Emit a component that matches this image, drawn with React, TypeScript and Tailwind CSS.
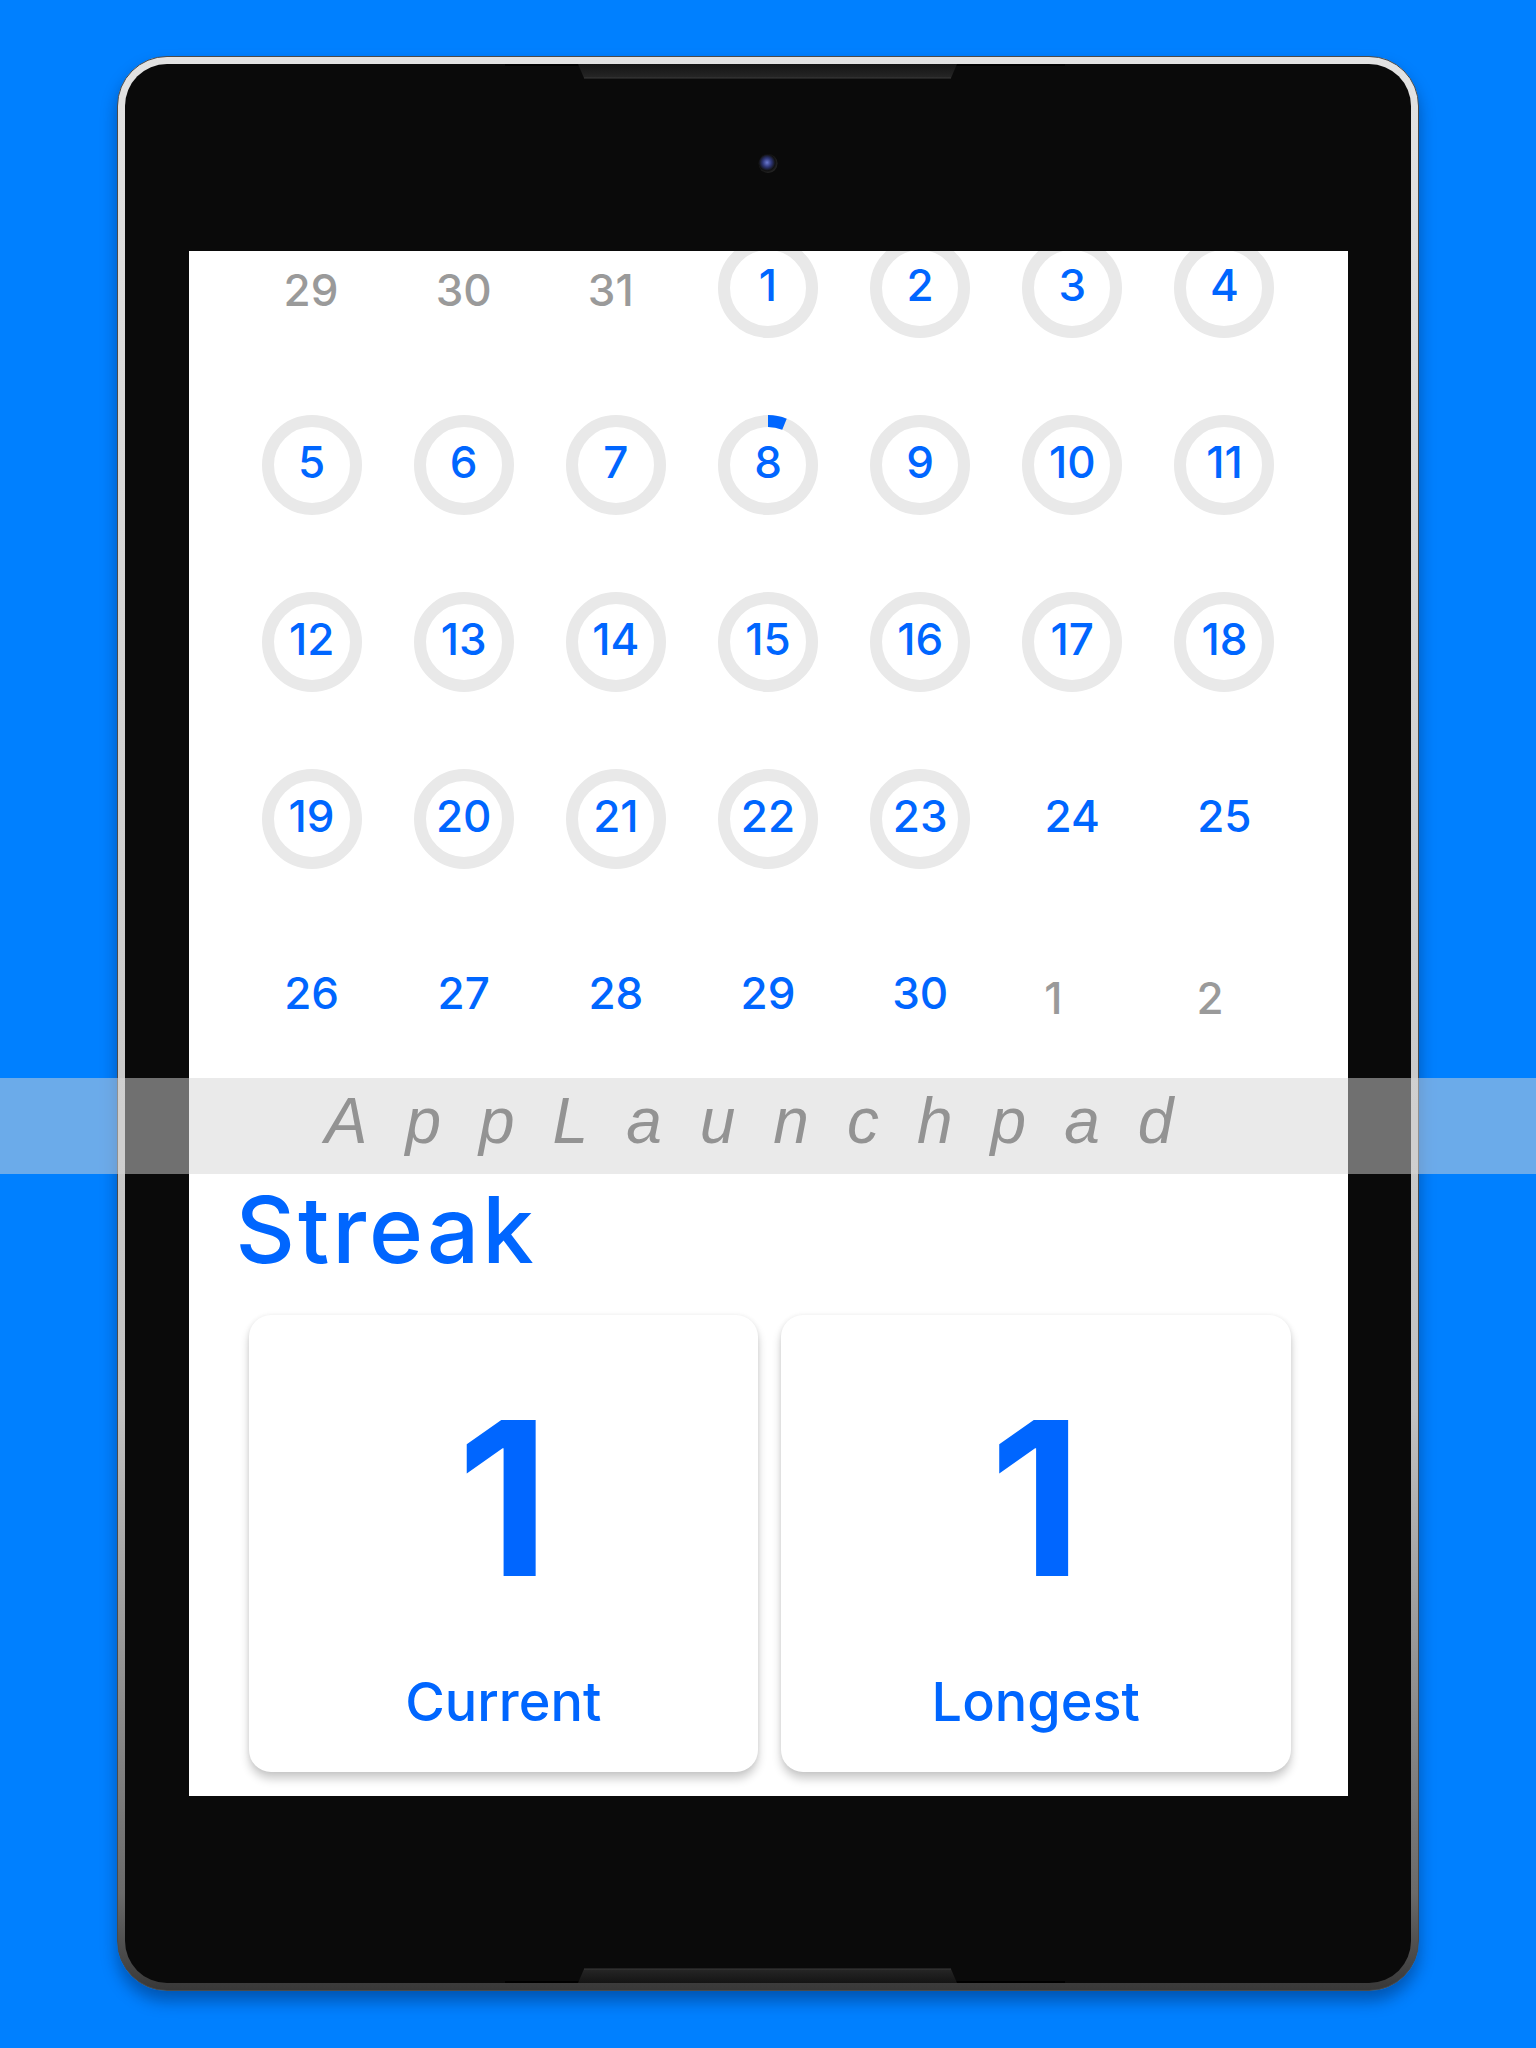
import React from 'react';

type Day = { n: number; kind: 'muted' | 'ring' | 'plain'; progress?: number };

const m = (n: number): Day => ({ n, kind: 'muted' });
const r = (n: number, progress?: number): Day => ({ n, kind: 'ring', progress });
const p = (n: number): Day => ({ n, kind: 'plain' });

const weeks: Day[][] = [
    [m(29), m(30), m(31), r(1), r(2), r(3), r(4)],
    [r(5), r(6), r(7), r(8, 22), r(9), r(10), r(11)],
    [r(12), r(13), r(14), r(15), r(16), r(17), r(18)],
    [r(19), r(20), r(21), r(22), r(23), p(24), p(25)],
    [p(26), p(27), p(28), p(29), p(30), m(1), m(2)],
];

const ProgressRing: React.FC<{ progress?: number }> = ({ progress }) => {
    const a = ((progress ?? 0) * Math.PI) / 180;
    const x = 50 + 44 * Math.sin(a);
    const y = 50 - 44 * Math.cos(a);
    return (
        <svg viewBox="0 0 100 100" className="absolute inset-0 w-full h-full">
            <circle cx="50" cy="50" r="44" fill="none" stroke="#e9e9e9" strokeWidth="12" />
            {progress ? (
                <path d={`M 50 6 A 44 44 0 0 1 ${x} ${y}`} fill="none" stroke="#0066ff" strokeWidth="12" />
            ) : null}
        </svg>
    );
};

const DayCell: React.FC<{ day: Day }> = ({ day }) => {
    if (day.kind === 'muted') {
        return (
            <div className="flex items-center justify-center h-[177px]">
                <span className="w-[56px] mt-[4px] text-left text-[44px] leading-none font-medium text-[#9a9a9a]">{day.n}</span>
            </div>
        );
    }
    if (day.kind === 'plain') {
        return (
            <div className="flex items-center justify-center h-[177px]">
                <span className="mb-[5px] text-[44px] leading-none font-medium text-[#0066ff]">{day.n}</span>
            </div>
        );
    }
    return (
        <div className="flex items-center justify-center h-[177px]">
            <div className="relative w-[100px] h-[100px] flex items-center justify-center">
                <ProgressRing progress={day.progress} />
                <span className="relative mb-[5px] text-[44px] leading-none font-medium text-[#0066ff]">{day.n}</span>
            </div>
        </div>
    );
};

const StatCard: React.FC<{ value: number; label: string }> = ({ value, label }) => (
    <div className="flex-1 h-[457px] bg-white rounded-[22px] shadow-[0_7px_10px_rgba(0,0,0,0.2),0_0_5px_rgba(0,0,0,0.07)] flex flex-col items-center pt-[76px]">
        <span className="text-[215px] leading-none font-bold text-[#0066ff]">{value}</span>
        <span className="mt-[69px] text-[54px] leading-none font-medium text-[#0066ff]">{label}</span>
    </div>
);

const Notch: React.FC<{ flip?: boolean }> = ({ flip }) => (
    <svg width="560" height="15" viewBox="0 0 560 15" className={flip ? '-scale-y-100' : ''}>
        <rect x="0" y="0" width="560" height="2" fill="#000" />
        <defs>
            <linearGradient id={flip ? 'nb' : 'nt'} x1="0" y1="0" x2="0" y2="1">
                <stop offset="0" stopColor="#141414" />
                <stop offset="1" stopColor="#262626" />
            </linearGradient>
        </defs>
        <polygon points="73,0 452,0 446,14 79,14" fill={`url(#${flip ? 'nb' : 'nt'})`} />
        <line x1="79" y1="14" x2="446" y2="14" stroke="#3a3a3a" strokeWidth="1.2" />
    </svg>
);

export default function App() {
    return (
        <div className="relative w-[1536px] h-[2048px] overflow-hidden bg-[#0080ff] font-[Inter,sans-serif]">
            <div className="pt-[56px] pl-[117px]">
                <div className="w-[1302px] h-[1935px] rounded-[50px] border border-[#4a4a4a] p-[7px] bg-[linear-gradient(to_bottom,#e2e2e2_0%,#c2c2c2_70%,#6a6a6a_95%,#383838_100%)] shadow-[0_10px_16px_rgba(0,20,60,0.4)]">
                    <div className="relative h-full rounded-[42px] bg-[#0a0a0a] flex flex-col items-center pt-[187px]">
                        <div className="absolute top-0 left-[380px]">
                            <Notch />
                        </div>
                        <div className="absolute top-[90px] left-1/2 -translate-x-1/2 w-[19px] h-[19px] rounded-full bg-[radial-gradient(circle_at_45%_45%,#6a78d0_0%,#2d3575_30%,#111_55%,#4a4a4a_100%)]" />
                        <div className="absolute bottom-0 left-[380px] flex">
                            <Notch flip />
                        </div>

                        <div className="w-[1159px] h-[1545px] bg-white overflow-hidden">
                            <div className="px-[47px] -mt-[52px]">
                                <div className="grid grid-cols-7">
                                    {weeks.flat().map((d, i) => (
                                        <DayCell key={i} day={d} />
                                    ))}
                                </div>

                                <h2 className="mt-[100px] text-[92px] leading-none font-medium tracking-[3px] text-[#0066ff]">Streak</h2>

                                <div className="mt-[39px] pl-[13px] pr-[10px] flex gap-[23px]">
                                    <StatCard value={1} label="Current" />
                                    <StatCard value={1} label="Longest" />
                                </div>
                            </div>
                        </div>
                    </div>
                </div>
            </div>

            <div className="absolute left-0 top-[1078px] w-full h-[96px] bg-[rgba(213,213,213,0.5)] flex justify-center pt-[11px]">
                <span className="font-['Liberation_Sans',Arial,sans-serif] italic text-[64px] leading-none tracking-[38px] text-[#939393]">AppLaunchpad</span>
            </div>
        </div>
    );
}
